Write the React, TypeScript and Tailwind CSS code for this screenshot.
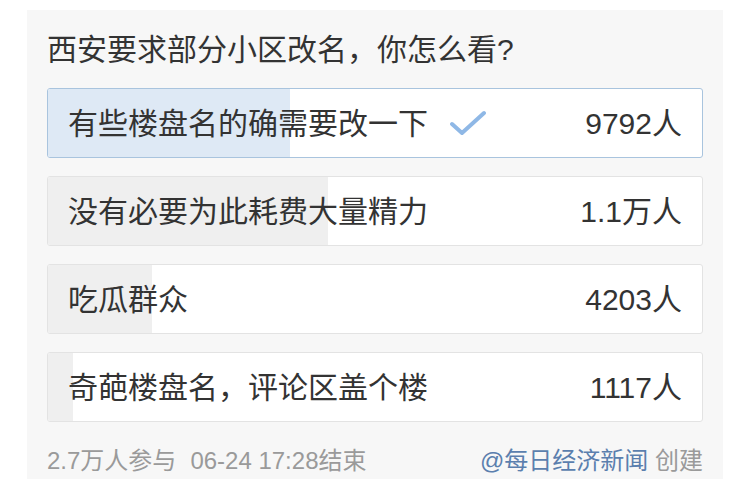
const options = [
  { label: '有些楼盘名的确需要改一下', count: '9792人', pct: 37, selected: true },
  { label: '没有必要为此耗费大量精力', count: '1.1万人', pct: 42.8, selected: false },
  { label: '吃瓜群众', count: '4203人', pct: 15.9, selected: false },
  { label: '奇葩楼盘名，评论区盖个楼', count: '1117人', pct: 3.8, selected: false },
];

const Check = () => (
  <svg width="36" height="26" viewBox="0 0 36 26" className="ml-[22px] shrink-0">
    <path d="M2 14 L12 23 L34 3" fill="none" stroke="#8fb8e6" strokeWidth="4" strokeLinecap="round" strokeLinejoin="round" />
  </svg>
);

const PollOption = ({ label, count, pct, selected }: (typeof options)[number]) => (
  <div
    className={`relative h-[70px] overflow-hidden rounded-[3px] border ${
      selected ? 'border-[#a9c4de] bg-white' : 'border-[#e3e3e3] bg-white'
    }`}
  >
    <div
      className={`absolute inset-y-0 left-0 ${selected ? 'bg-[#dee9f5]' : 'bg-[#efefef]'}`}
      style={{ width: `${pct}%` }}
    />
    <div className="relative flex h-full items-center pl-[20px] pr-[20px] text-[30px] text-[#333]">
      <span>{label}</span>
      {selected && <Check />}
      <span className="ml-auto">{count}</span>
    </div>
  </div>
);

export default function App() {
  return (
    <div
      className="h-[479px] w-[750px] overflow-hidden bg-white pl-[27px] pt-[10px]"
      style={{ fontFamily: '"Liberation Sans", "Noto Sans CJK SC", sans-serif' }}
    >
      <div className="h-[469px] w-[696px] bg-[#f7f7f7] px-[20px] pt-[20px]">
        <div className="text-[30px] leading-[40px] text-[#333]">西安要求部分小区改名，你怎么看?</div>
        <div className="mt-[18px] flex flex-col gap-[18px]">
          {options.map((o) => (
            <PollOption key={o.label} {...o} />
          ))}
        </div>
        <div className="mt-[24px] flex items-center text-[24px] leading-[30px] text-[#9a9a9a]">
          <span>
            2.7万人参与<span className="ml-[14px]">06-24 17:28结束</span>
          </span>
          <span className="ml-auto">
            <span className="text-[#5b7fae]">@每日经济新闻</span> 创建
          </span>
        </div>
      </div>
    </div>
  );
}
